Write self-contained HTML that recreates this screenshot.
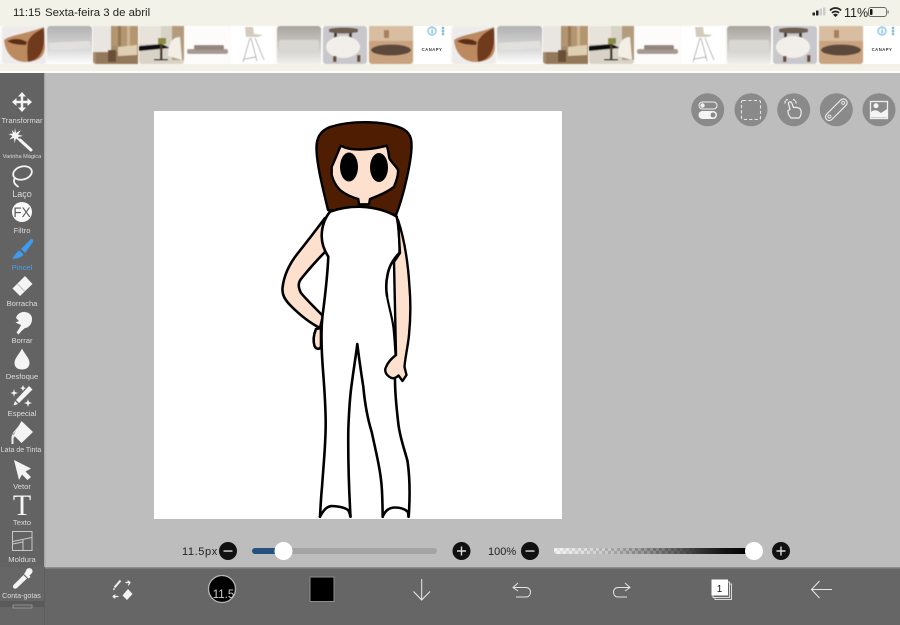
<!DOCTYPE html>
<html><head><meta charset="utf-8"><style>
html,body{margin:0;padding:0;width:900px;height:625px;overflow:hidden;background:#bdbdbd}
svg{display:block;filter:blur(.25px)}
text{font-family:"Liberation Sans",sans-serif}
.l{fill:#dcdcdc;font-size:7.6px;text-anchor:middle}
.w{fill:#f4f4f4}
.ln{fill:none;stroke:#f0f0f0;stroke-width:1.2;stroke-linecap:round;stroke-linejoin:round}
.b{fill:none;stroke:#000;stroke-width:2.6;stroke-linecap:round;stroke-linejoin:round}
</style></head><body>
<svg width="900" height="625" viewBox="0 0 900 625" xmlns="http://www.w3.org/2000/svg">
<defs>
<linearGradient id="g2" x1="0" y1="0" x2="0" y2="1"><stop offset="0" stop-color="#b2b2b2"/><stop offset=".6" stop-color="#d8d8d8"/><stop offset="1" stop-color="#fff"/></linearGradient>
<linearGradient id="g7" x1="0" y1="0" x2="0" y2="1"><stop offset="0" stop-color="#a8a49f"/><stop offset="1" stop-color="#efeeec"/></linearGradient>
<linearGradient id="op" x1="0" y1="0" x2="1" y2="0"><stop offset="0" stop-color="#e6e6e6"/><stop offset=".25" stop-color="#b0b0b0"/><stop offset=".55" stop-color="#666"/><stop offset=".85" stop-color="#151515"/><stop offset="1" stop-color="#000"/></linearGradient>
<pattern id="chk" width="6" height="6" patternUnits="userSpaceOnUse" x="554" y="548"><rect width="3" height="3" fill="#fff" fill-opacity=".55"/><rect x="3" y="3" width="3" height="3" fill="#fff" fill-opacity=".55"/></pattern>
<linearGradient id="chkf" x1="554" y1="0" x2="700" y2="0" gradientUnits="userSpaceOnUse"><stop offset="0" stop-color="#fff"/><stop offset="1" stop-color="#fff" stop-opacity="0"/></linearGradient>
<mask id="mk"><rect x="554" y="548" width="150" height="6" fill="url(#chkf)"/></mask>
<filter id="s"><feGaussianBlur stdDeviation=".5"/></filter>
<g id="ad" filter="url(#s)">
<rect x="2" y="26" width="44" height="38" rx="3" fill="#eeecea"/>
<path d="M4 40C10 35 25 34 44 27L45 48C44 58 37 62 24 62C12 61 5 52 4 40Z" fill="#bd8a60"/>
<path d="M28 62C38 60 44 54 44.500 36L44 28C37 31 31 35 28 41C27 49 27 55 28 62Z" fill="#6f3a1a"/>
<path d="M7 41C14 38 20 38 27 42L26 45C18 45 11 44 7 41Z" fill="#5d2d12"/>
<rect x="47" y="26" width="45" height="38" rx="3" fill="url(#g2)"/>
<path d="M48 43L64 42L90 41L91 48L64 50L49 50Z" fill="#e1e0dc"/>
<rect x="93" y="26" width="45" height="38" rx="3" fill="#a68c6c"/>
<rect x="93" y="26" width="18" height="26" fill="#e9e6e2"/>
<rect x="112" y="26" width="26" height="20" fill="#b3956f"/>
<rect x="118" y="26" width="3" height="20" fill="#937754"/><rect x="127" y="26" width="3" height="20" fill="#cdb592"/>
<rect x="96" y="52" width="42" height="12" fill="#94785a"/>
<path d="M118 47L137 45L137 55L118 56Z" fill="#dfcfb2"/><rect x="108" y="50" width="8" height="12" fill="#6b5037"/>
<rect x="139" y="26" width="45" height="38" rx="3" fill="#d8d2c7"/>
<rect x="139" y="26" width="22" height="18" fill="#e8e3da"/><rect x="172" y="26" width="12" height="34" fill="#b39c7d"/>
<path d="M139 46L162 44L170 48L139 51Z" fill="#111"/>
<path d="M168 56C168 44 172 37 180 37L182 60Z" fill="#f3efe7"/>
<rect x="160" y="44" width="2.500" height="16" fill="#4a3a20"/><rect x="154" y="59" width="14" height="1.500" fill="#333"/>
<rect x="158" y="38" width="8" height="6" fill="#8c8a3a"/>
<rect x="185" y="26" width="45" height="38" fill="#fdfcfb"/>
<rect x="187" y="49" width="41" height="5" rx="2" fill="#a89a90"/><rect x="194" y="45" width="30" height="5" rx="1.500" fill="#948781"/>
<rect x="231" y="26" width="44" height="38" fill="#fff"/>
<path d="M245 27L246 37L258 37L263 35L254 34L253 27Z" fill="#d2cbbc"/>
<path d="M250 38L243 62M251 38L257 61M244 59L256 57M255 38L264 60" stroke="#8f8f8f" stroke-width=".7" fill="none"/>
<rect x="277" y="26" width="44" height="38" rx="3" fill="url(#g7)"/>
<rect x="279" y="40" width="40" height="10" rx="2" fill="#d9d7d1"/>
<rect x="323" y="26" width="44" height="38" rx="3" fill="#c8c8cc"/>
<path d="M329 29C335 27 352 27 358 29L358 32C350 34 336 34 329 32Z" fill="#6d5e50"/><rect x="334" y="33" width="3" height="5" fill="#4a3a2c"/><rect x="349" y="33" width="3" height="5" fill="#4a3a2c"/>
<ellipse cx="343" cy="47" rx="17" ry="11" fill="#f2efea"/>
<rect x="333" y="56" width="3.500" height="6" fill="#6f4d35"/><rect x="357" y="55" width="3.500" height="7" fill="#6f4d35"/>
<rect x="369" y="26" width="44" height="38" rx="3" fill="#c9a27f"/>
<rect x="369" y="26" width="44" height="15" fill="#d8bda0"/>
<ellipse cx="391" cy="50" rx="20" ry="5.500" fill="#5d483a"/>
<rect x="384" y="30" width="5" height="8" fill="#a87f5c"/>
<circle cx="432" cy="31" r="4" fill="none" stroke="#5ba8d6" stroke-width="1"/><rect x="431.500" y="30" width="1.200" height="3.500" fill="#5ba8d6"/><rect x="431.500" y="28.300" width="1.200" height="1" fill="#5ba8d6"/>
<circle cx="443" cy="28" r="1.100" fill="#3f93bd"/><circle cx="443" cy="31" r="1.100" fill="#3f93bd"/><circle cx="443" cy="34" r="1.100" fill="#3f93bd"/>
</g>
</defs>

<!-- top -->
<rect width="900" height="72" fill="#f3f2e8"/>
<rect x="0" y="71" width="900" height="2" fill="#fdfdfa"/>
<text x="13" y="16" font-size="11.400" fill="#222">11:15</text>
<text x="45" y="16" font-size="11.400" fill="#222">Sexta-feira 3 de abril</text>
<rect x="812.500" y="12.500" width="2.500" height="3" rx=".5" fill="#222"/><rect x="816" y="10.500" width="2.500" height="5" rx=".5" fill="#222"/><rect x="819.500" y="8.500" width="2.500" height="7" rx=".5" fill="#ccc"/><rect x="823" y="7.500" width="2.500" height="8" rx=".5" fill="#ccc"/>
<path d="M830 10.500C833 7.200 838 7.200 841 10.500M832 12.900C834 11 837 11 839 12.900" fill="none" stroke="#222" stroke-width="1.800"/><path d="M835.500 17L833 14.700C835 13.500 836 13.500 838 14.700Z" fill="#222"/>
<text x="844" y="17" font-size="12.500" fill="#222">11%</text>
<rect x="868.500" y="7.500" width="18" height="9" rx="2.500" fill="none" stroke="#666" stroke-width=".9"/><rect x="870" y="9" width="2.500" height="6" rx="1" fill="#111"/><rect x="887.500" y="10.500" width="1.200" height="3" fill="#777"/>

<rect y="26" width="900" height="38" fill="#fbfaf6"/>
<rect x="414" y="26" width="36" height="38" fill="#fff"/><rect x="864" y="26" width="36" height="38" fill="#fff"/>
<use href="#ad"/>
<use href="#ad" x="450"/>
<text x="432" y="51" font-size="4.200" fill="#333" text-anchor="middle" font-weight="bold" letter-spacing=".5">CANAPY</text>
<text x="882" y="51" font-size="4.200" fill="#333" text-anchor="middle" font-weight="bold" letter-spacing=".5">CANAPY</text>

<!-- main -->
<rect x="0" y="73" width="900" height="552" fill="#bdbdbd"/>
<rect x="0" y="73" width="44" height="552" fill="#636363"/>
<rect x="44" y="73" width="1.500" height="495" fill="#aaa"/>
<rect x="154" y="111" width="408" height="408" fill="#fff"/>

<!-- figure -->
<path d="M328 210C322 185 317 165 316.500 150C316 138 320 131 330 127C352 120 385 121 401 128C410 132 412 138 411.500 148C411 162 404 195 396 215Z" fill="#4f1e02" stroke="#000" stroke-width="2.400" stroke-linejoin="round"/>
<path d="M340.700 145.700C347 149 352 149.500 360 149.500C369 149.500 378 148 386.700 145.700C388.500 150 388.500 155 389.500 158.500C392 163 396 166 398 170C398.500 176 396 182 394 186.700C388 192 378 196 370 199L369 204.300L359 204.300L358.300 199C351 197 345 194 340 190C335 185 333 180 331.700 175L331.700 166.700C335 160 338 152 340.700 145.700Z" fill="#fde0cd" stroke="#000" stroke-width="2.400" stroke-linejoin="round"/>
<ellipse cx="349" cy="167" rx="9" ry="14.500" fill="#000"/>
<ellipse cx="379" cy="167.500" rx="9" ry="14.500" fill="#000"/>
<!-- left arm -->
<path d="M325 218C316 230 306 243 298 253C290 263 284 274 282.500 288C282 295 285 300 291 306C300 315 310 323 320 328L323 316C314 307 305 298 301 293C298 287 298 283 301 279C309 269 318 259 326 251Z" fill="#fde0cd" stroke="#000" stroke-width="2.600" stroke-linejoin="round"/>
<path d="M316 329C313.500 335 313 341 314.500 346C316 349 319 350 321 347L321 328Z" fill="#fde0cd" stroke="#000" stroke-width="2.600" stroke-linejoin="round"/>
<!-- body -->
<path d="M330 211.700C340 208 352 206.500 362 206.800C375 207.500 388 211 396.700 216.700C398.500 225 400 240 399 252C394 258 389 266 387.500 275C386 282 386 290 387 296C389 308 393 320 393.700 330C395 340 395 350 395.500 380C396 395 399 415 401 428C404 442 408 455 408.500 470L408.500 517L320 517C321 500 322 490 323.500 470C325 445 326 425 325.500 400C324.500 380 322 350 321.700 330C322 318 325 300 326 280C327 270 328 262 328 256.700C324 250 321.500 243 321.700 235C322 225 325 218 330 211.700Z" fill="#fff"/>
<path class="b" d="M330 211.700C340 208 352 206.500 362 206.800C375 207.500 388 211 396.700 216.700"/>
<path class="b" d="M330 211.700C325 218 322 225 321.700 235C321.500 243 324 250 328.300 256.700C327.500 275 325 297 322.500 316C321 330 321.500 345 322 355C323 375 325.500 395 325.700 423C325.700 445 323.500 465 322 487C321 497 320.500 507 320 516.700"/>
<path class="b" d="M320 516.700C323 511 326 507 331 506C336 506 344 507 348 510C349.500 512 350 515 350.500 516.700"/>
<path class="b" d="M350.500 516.700C349 490 348 455 348.300 430C349 410 350 395 352 382C353.500 370 356 355 357.300 344C359 358 361 372 363.300 386.700C365 405 368 420 371.700 432C376 452 380.500 470 381.700 486.700C382.500 497 382.500 508 382.700 516.700"/>
<path class="b" d="M382.700 516.700C385 511 389 507.500 395 507.500C400 507.500 405 509 408 512L408.500 516.700"/>
<path class="b" d="M408.700 516.700C410 498 410 478 407.500 461C404 448 399.500 436 398.300 423.300C396.500 408 395 395 395 380"/>
<path class="b" d="M396.700 216.700C398.500 225 400 240 399.500 253C394 258 389 266 387.500 275C386 282 386 290 387 296"/>
<path d="M387 296C389 308 393 320 393.700 330C394.500 338 395 346 395.500 355" fill="none" stroke="#000" stroke-width="2.200" stroke-linecap="round"/>
<!-- right arm, on top of body -->
<path d="M398 220C404 238 408 262 409.500 287C411 305 410.500 320 409 335C408 346 405 358 404.500 367L406.500 375L402.500 381L398.500 375.500C396 378 393 379 390.500 377.500C386 375 384 371 386 367C388 362 392 358 396 355L394 262L400 253Z" fill="#fde0cd" stroke="#000" stroke-width="2.400" stroke-linejoin="round"/>

<!-- right buttons -->
<g fill="#8a8a8a"><circle cx="707.700" cy="109.700" r="16.500"/><circle cx="751" cy="109.700" r="16.500"/><circle cx="793.700" cy="109.700" r="16.500"/><circle cx="836.300" cy="109.700" r="16.500"/><circle cx="879" cy="109.700" r="16.500"/></g>
<rect x="699" y="102" width="18" height="7" rx="3.500" fill="none" stroke="#eee" stroke-width="1"/><circle cx="702.500" cy="105.500" r="2.200" fill="#eee"/>
<rect x="698.500" y="111" width="18.500" height="8" rx="4" fill="#f4f4f4"/><circle cx="713" cy="115" r="2.500" fill="#8a8a8a"/>
<rect x="741.500" y="100.500" width="19" height="19" rx="1.500" fill="none" stroke="#e4e4e4" stroke-width="1.100" stroke-dasharray="3.200 2.200"/>
<path class="ln" d="M791 118C788.500 115 787.500 113 788 110.500L790 109.500L788.500 104C788 101.800 791 101 791.800 103L793.500 107.500C797 107 801 108 801 111C801.500 114 800.500 116.500 799 118Z"/>
<path class="ln" d="M785 103C785 100.500 786.500 99.500 788.500 99.500M796 103C796 101 794.500 99.500 792.500 99.500" stroke-dasharray="1.500 1.500"/>
<g transform="rotate(-45 836.300 109.700)"><rect x="822.500" y="106" width="27.500" height="7.500" rx="3.700" fill="none" stroke="#eee" stroke-width="1.100"/><circle cx="826.500" cy="109.700" r="1.500" fill="none" stroke="#eee" stroke-width=".9"/><circle cx="846" cy="109.700" r="1.500" fill="none" stroke="#eee" stroke-width=".9"/></g>
<rect x="870.500" y="101.500" width="17" height="17" fill="none" stroke="#eee" stroke-width="1.300"/><circle cx="876" cy="105.700" r="2.500" fill="#f4f4f4"/><path d="M871 117.500L871 112C876 108 879 112 881 113L887 109L887.500 117.500Z" fill="#f4f4f4"/>

<!-- sliders -->
<text x="182" y="555" font-size="11" fill="#222" letter-spacing=".6">11.5px</text>
<circle cx="228" cy="551" r="9" fill="#111"/><rect x="223.500" y="550.300" width="9" height="1.500" fill="#ccc"/>
<rect x="252" y="548" width="185" height="6" rx="3" fill="#a4a4a4"/><path d="M255 548H283V554H255A3 3 0 0 1 255 548Z" fill="#26527f"/>
<circle cx="283.500" cy="551" r="9" fill="#fff"/>
<circle cx="461.500" cy="551" r="9" fill="#111"/><path d="M457 551H466M461.500 546.500V555.500" stroke="#ddd" stroke-width="1.400"/>
<text x="488" y="555" font-size="11" fill="#222">100%</text>
<circle cx="530" cy="551" r="9" fill="#111"/><rect x="525.500" y="550.300" width="9" height="1.500" fill="#ccc"/>
<rect x="554" y="548" width="198" height="6" rx="3" fill="url(#op)"/>
<rect x="554" y="548" width="150" height="6" fill="url(#chk)" mask="url(#mk)"/>
<circle cx="754" cy="551" r="9" fill="#fff"/>
<circle cx="781" cy="551" r="9" fill="#111"/><path d="M776.500 551H785.500M781 546.500V555.500" stroke="#ddd" stroke-width="1.400"/>

<!-- bottom bar -->
<rect x="0" y="567" width="900" height="58" fill="#666"/>
<rect x="45" y="567" width="855" height="1.500" fill="#8e8e8e"/>
<rect x="0" y="601" width="44" height="6" fill="#5a5a5a"/>
<rect x="13" y="605" width="19" height="3" fill="#5f5f5f" stroke="#a5a5a5" stroke-width=".7"/>
<rect x="44" y="568" width="1" height="57" fill="#5d5d5d"/>

<path d="M120.500 580.500L114.500 587.500" stroke="#f4f4f4" stroke-width="2"/><path d="M113.500 588L113 590.500L115.500 589Z" fill="#f4f4f4"/>
<path d="M126 582.500H130L128.500 585M130 582.500L128 581" class="ln" stroke-width=".9"/>
<path d="M128 589L132.500 594L127 600L122.500 595.500Z" fill="#f4f4f4"/>
<path d="M113 596.500H118M115 595L113 596.500L115 598" class="ln" stroke-width=".9"/>

<circle cx="222" cy="589" r="13.500" fill="#000" stroke="#b5b5b5" stroke-width="1.300"/>
<text x="223.500" y="598" font-size="11.500" fill="#ccc" text-anchor="middle">11.5</text>
<rect x="310" y="577" width="24" height="24.500" fill="#000" stroke="#8f8f8f" stroke-width="1"/>
<path d="M421.700 579V600M413.500 591.500L421.700 600L430 591.500" fill="none" stroke="#eaeaea" stroke-width="1"/>
<path d="M518 583L513 587.500L518 591M513 587.500H526C532 587.500 532 597 526 597H516" fill="none" stroke="#e4e4e4" stroke-width="1"/>
<path d="M625 583L630 587.500L625 591M630 587.500H618C612 587.500 612 597 618 597H627" fill="none" stroke="#e4e4e4" stroke-width="1"/>
<rect x="715" y="584" width="16.500" height="15.500" fill="none" stroke="#e8e8e8" stroke-width=".9"/>
<rect x="713" y="582" width="16.500" height="15.500" fill="#666" stroke="#e8e8e8" stroke-width=".9"/>
<rect x="711.500" y="579.500" width="16.500" height="16" fill="#fff"/>
<text x="719.500" y="592" font-size="10" fill="#111" text-anchor="middle">1</text>
<path d="M832 589.500H811.500M819.500 581L811.500 589.500L819.500 598" fill="none" stroke="#e8e8e8" stroke-width="1"/>

<!-- sidebar icons -->
<path class="w" d="M22 92L26 96.500H23.200V100.800H27.500V98L32 102L27.500 106V103.200H23.200V107.500H26L22 112L18 107.500H20.800V103.200H16.500V106L12 102L16.500 98V100.800H20.800V96.500H18Z"/>
<text class="l" x="22" y="123">Transformar</text>
<path d="M20 140L31 150" stroke="#f4f4f4" stroke-width="3" stroke-linecap="round"/>
<path class="w" d="M15 128L16 133L21 130L18 134.500L23 136L18 137L20 141.500L16 138.500L14.500 143L14 138L9.500 139.500L12.500 136L8.500 134L13 133.500L11.500 130L14.500 132.500Z"/>
<text class="l" x="22" y="158" style="font-size:5.600px">Varinha Mágica</text>
<ellipse cx="22.500" cy="173" rx="9.500" ry="6.500" transform="rotate(-15 22.500 173)" fill="none" stroke="#f4f4f4" stroke-width="1.800"/>
<path d="M15 178C13 181 14 184 18 186.500" fill="none" stroke="#f4f4f4" stroke-width="1.800" stroke-linecap="round"/>
<text class="l" x="22" y="197" style="font-size:9px">Laço</text>
<circle cx="22" cy="212" r="10" fill="#fbfbfb"/>
<text x="22" y="217" font-size="13.500" fill="#5a5a5a" text-anchor="middle">FX</text>
<text class="l" x="22" y="233">Filtro</text>
<path d="M31 239L21 249L25 253L33 242C33.500 240 32.500 238.500 31 239Z" fill="#3c9cef"/>
<path d="M19.500 250.500L23.500 254.500C21 258 16 259 12 258.500C14.500 256.500 15.500 252.500 19.500 250.500Z" fill="#3c9cef"/>
<text class="l" x="22" y="270" style="fill:#4aa3ea">Pincel</text>
<path class="w" d="M25 276L32.500 284L20 296L12.500 288.500Z"/><path d="M17.500 284L24.500 291" stroke="#a0a0a0" stroke-width=".6"/>
<text class="l" x="22" y="306">Borracha</text>
<path class="w" d="M16 318C17 313.500 22 311.500 25 312C30 312.500 32.500 316 32 320C31.500 325 28 328 25 328L21.500 331L18.500 334.500L16.500 332.500L19.500 328L21 325L15.500 322.500L19 321Z"/>
<text class="l" x="22" y="343">Borrar</text>
<path class="w" d="M22 348.500C24.500 354 29.500 358 29.500 363C29.500 367.500 26 369.500 22 369.500C18 369.500 14.500 367.500 14.500 363C14.500 358 19.500 354 22 348.500Z"/>
<text class="l" x="22" y="379">Desfoque</text>
<path class="w" d="M29 386L32.500 389.500L19 403L16 400Z"/><path class="w" d="M15 401L18 404L13.500 405.500Z"/>
<path class="w" d="M23 385L24 387.500L26 388L24 389L23 391L22 389L20 388L22 387.500ZM14 389L14.800 392L18 393L14.800 394L14 397L13.200 394L10.500 393L13.200 392ZM28 399L29 402L32 403L29 404L28 407L27 404L24 403L27 402Z"/>
<text class="l" x="22" y="416">Especial</text>
<path class="w" d="M21.500 421L33 432L21.500 443L13.500 435Z"/><path d="M12.500 434L11.500 437V444H13.500V438L15 436Z" fill="#eee"/><path d="M13 433.500L21 424" stroke="#eee" stroke-width="1"/>
<text class="l" x="21" y="452" style="font-size:7px">Lata de Tinta</text>
<path class="w" d="M14 460L31 468.500L25.500 471.500L31 477L27.500 480L22 474.500L19 480Z"/>
<text class="l" x="22" y="489">Vetor</text>
<text x="22" y="515" font-size="30" text-anchor="middle" fill="#f6f6f6" style="font-family:'Liberation Serif',serif">T</text>
<text class="l" x="22" y="525">Texto</text>
<rect x="12.500" y="531.500" width="19.500" height="19" fill="none" stroke="#c8c8c8" stroke-width="1"/>
<path d="M12.500 541.500L32 537.500M23 539.500V550.500M12.500 544L23 542" fill="none" stroke="#c8c8c8" stroke-width="1"/>
<text class="l" x="22" y="562">Moldura</text>
<path class="w" d="M26.500 569.500C28 567.500 31 568 32 569.500C33 571 32.500 573 31 574L29.500 575.500L30.500 577L28.500 578.500L24 574L25.500 572Z"/>
<path class="w" d="M23.500 575L27 578.500L17.500 587.500C16 589 14.500 589 13.500 588C12.500 587 13 585.500 14 584.500Z"/>
<text class="l" x="21.500" y="598" style="font-size:7.100px">Conta-gotas</text>
</svg>
</body></html>
